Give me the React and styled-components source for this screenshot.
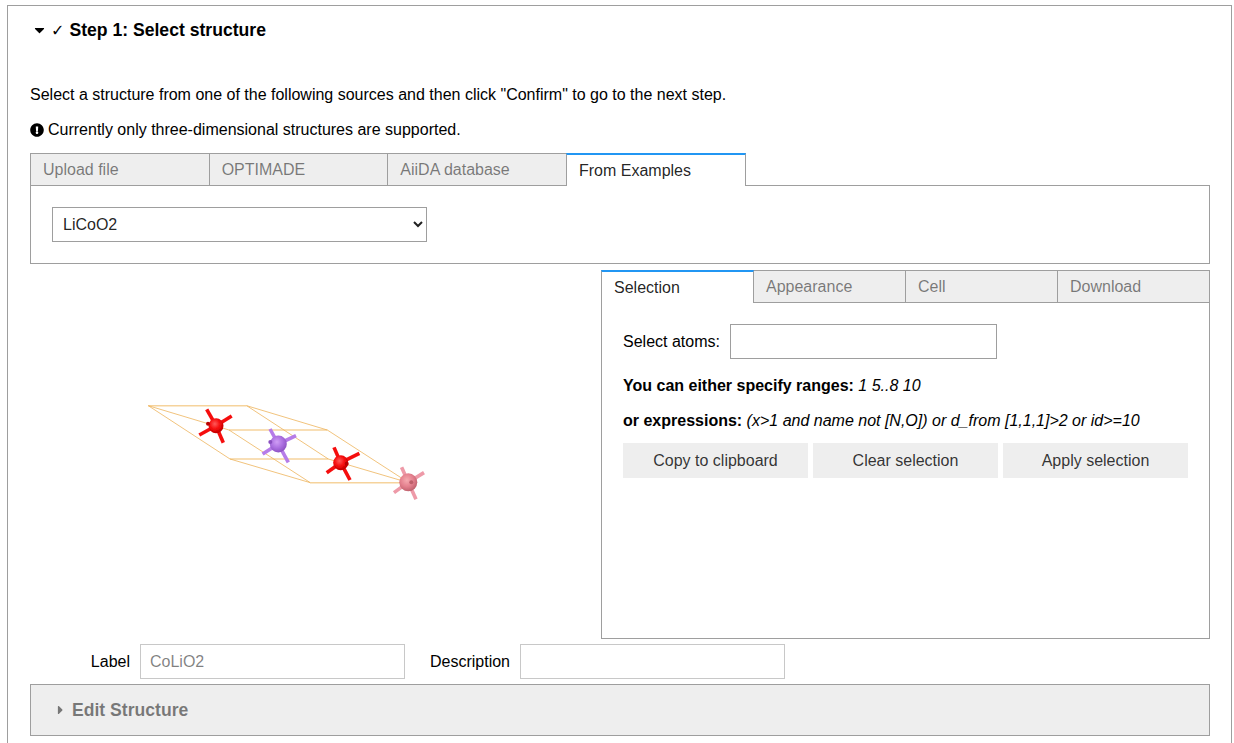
import React from 'react';
import styled, { createGlobalStyle } from 'styled-components';
import { FaCaretDown, FaCaretRight, FaExclamationCircle } from 'react-icons/fa';

const GlobalStyle = createGlobalStyle`
  html, body { margin: 0; padding: 0; height: 743px; overflow: hidden; background: #fff; }
  body { font-family: "Liberation Sans", Arial, sans-serif; font-size: 16px; color: #000; }
  * { box-sizing: border-box; }
`;

const Page = styled.div`
  width: 1225px;
  margin: 5px 0 0 7px;
  padding: 0 21px 40px 22px;
  border: 1px solid #9e9e9e;
`;

const StepHeader = styled.div`
  display: flex;
  align-items: center;
  height: 48px;
  font-size: 17.6px;
  font-weight: 700;
  svg { width: 13px; height: 16px; margin: 0 5px 0 3px; }
`;

const Check = styled.span`
  font-size: 16px;
  margin-right: 5px;
  font-family: "DejaVu Sans", sans-serif;
`;

const Paragraph = styled.div`
  height: 35px;
  display: flex;
  align-items: center;
  gap: 4px;
  margin-top: ${p => p.$top || 0}px;
  svg { width: 14px; height: 14px; }
`;

const TabBar = styled.div`
  display: flex;
  height: 33px;
  margin-top: 6px;
`;

const Tab = styled.div`
  flex: 0 0 ${p => p.$width}px;
  height: ${p => (p.$active ? 33 : 33)}px;
  margin-left: -1px;
  &:first-child { margin-left: 0; }
  padding: 0 12px;
  display: flex;
  align-items: center;
  border: 1px solid #9e9e9e;
  background: ${p => (p.$active ? '#fff' : '#eeeeee')};
  color: ${p => (p.$active ? 'rgba(0,0,0,0.87)' : 'rgba(0,0,0,0.5)')};
  ${p => p.$active && `
    border-top: 2px solid #2196f3;
    border-bottom: 0;
    position: relative;
    z-index: 1;
    padding-top: 0;
  `}
`;

const TabBody = styled.div`
  padding: 21px;
  margin-top: -1px;
  border: 1px solid #9e9e9e;
`;

const Select = styled.select`
  display: block;
  width: 375px;
  height: 35px;
  padding: 0 6px;
  font: 16px "Liberation Sans", Arial, sans-serif;
  color: rgba(0,0,0,0.87);
  background: #fff;
  border: 1px solid #9e9e9e;
  border-radius: 0;
  outline: none;
`;

const ViewerRow = styled.div`
  display: flex;
  height: 369px;
  margin-top: 6px;
`;

const Viewer = styled.div`
  flex: 0 0 571px;
  svg { display: block; }
`;

const SidePanel = styled.div`
  flex: 0 0 609px;
  display: flex;
  flex-direction: column;
  ${TabBar} { margin-top: 0; }
  ${TabBody} { flex: 1; }
`;

const FieldRow = styled.div`
  display: flex;
  align-items: center;
  gap: 10px;
  height: 35px;
`;

const TextInput = styled.input`
  width: ${p => p.$width}px;
  height: 35px;
  padding: 0 9px;
  font: 16px "Liberation Sans", Arial, sans-serif;
  border: 1px solid ${p => (p.disabled || p.$light ? '#c8c8c8' : '#9e9e9e')};
  border-radius: 0;
  background: #fff;
  outline: none;
  &:disabled { color: rgba(0,0,0,0.5); }
`;

const HelpLine = styled.div`
  height: 35px;
  display: flex;
  align-items: center;
  white-space: pre;
  margin-top: ${p => p.$top || 0}px;
`;

const ButtonRow = styled.div`
  display: flex;
  gap: 5px;
  margin-top: 5px;
`;

const Button = styled.button`
  width: 185px;
  height: 35px;
  padding: 0;
  border: 0;
  background: #eeeeee;
  color: rgba(0,0,0,0.8);
  font: 16px "Liberation Sans", Arial, sans-serif;
`;

const MetaRow = styled.div`
  display: flex;
  gap: 5px;
  margin-top: 5px;
`;

const MetaField = styled.div`
  display: flex;
  align-items: center;
  gap: 10px;
`;

const MetaLabel = styled.label`
  width: 100px;
  text-align: right;
`;

const Collapsed = styled.div`
  display: flex;
  align-items: center;
  height: 52px;
  margin-top: 5px;
  padding-left: 24px;
  background: #eeeeee;
  border: 1px solid #9e9e9e;
  color: rgba(0,0,0,0.5);
  font-size: 17.6px;
  font-weight: 700;
  svg { width: 11px; height: 14px; margin-right: 6px; }
`;

const corners = {
  A: [148.3, 405.7], B: [246.7, 405.7], C: [327.3, 430], D: [229, 430],
  E: [230, 459], F: [328.3, 459], G: [310.3, 482.7], H: [408.7, 482.7],
};
const flatEdges = ['AB', 'DC', 'EF', 'GH'];
const slantEdges = ['BC', 'AD', 'AE', 'EG', 'DG', 'BF', 'FH', 'CH'];

const atoms = [
  { id: 'red', x: 216, y: 425.7, r: 7.5, stick: '#f50d0d', ends: [[-9.3, -16.3], [15.7, -9.7], [7.3, 17], [-16.7, 9.3]], stub: [-8, -2] },
  { id: 'purple', x: 278.3, y: 444, r: 8.5, stick: '#b67ce8', ends: [[-8.3, -15], [17.7, -8.3], [10, 18.3], [-15.7, 10]], stub: [-8, -2] },
  { id: 'red', x: 340.7, y: 462.7, r: 7.5, stick: '#f50d0d', ends: [[-6.7, -15.3], [18.7, -9.3], [9.3, 17.3], [-14, 10]], stub: [6, 1] },
  { id: 'pink', x: 408.3, y: 482.3, r: 9, stick: '#ee9aa8', ends: [[-6.7, -15], [15.7, -9.7], [7.7, 17], [-14.3, 10.3]], stub: [3, 0] },
];

const spheres = {
  red: ['#ff5a5a', '#f50a0a', '#b80000'],
  purple: ['#cf9df5', '#ab6fe0', '#8a50c0'],
  pink: ['#f5aab0', '#e4808e', '#bd5f6b'],
};

function Structure() {
  const edge = (name, props) => {
    const [a, b] = [corners[name[0]], corners[name[1]]];
    return <line key={name} x1={a[0]} y1={a[1]} x2={b[0]} y2={b[1]} {...props} />;
  };
  return (
    <svg width="571" height="369" viewBox="30 270 571 369">
      <defs>
        {Object.entries(spheres).map(([id, c]) => (
          <radialGradient key={id} id={id} cx="0.42" cy="0.38" r="0.65">
            <stop offset="0" stopColor={c[0]} />
            <stop offset="0.55" stopColor={c[1]} />
            <stop offset="1" stopColor={c[2]} />
          </radialGradient>
        ))}
        <filter id="soft"><feGaussianBlur stdDeviation="0.35" /></filter>
      </defs>
      <g filter="url(#soft)">
        {flatEdges.map(n => edge(n, { stroke: '#f6d39c', strokeWidth: 1.4 }))}
        {slantEdges.map(n => edge(n, { stroke: '#eeb45c', strokeWidth: 0.8 }))}
        {atoms.map((a, i) => (
          <g key={i}>
            {a.ends.map((e, j) => (
              <line key={j} x1={a.x} y1={a.y} x2={a.x + e[0]} y2={a.y + e[1]} stroke={a.stick} strokeWidth="3.6" />
            ))}
            <circle cx={a.x} cy={a.y} r={a.r} fill={`url(#${a.id})`} />
            <circle cx={a.x + a.stub[0]} cy={a.y + a.stub[1]} r="2" fill={spheres[a.id][2]} />
          </g>
        ))}
      </g>
    </svg>
  );
}

export default function App() {
  return (
    <>
      <GlobalStyle />
      <Page>
        <StepHeader><FaCaretDown /><Check>✓</Check>Step 1: Select structure</StepHeader>
        <Paragraph $top={23}>Select a structure from one of the following sources and then click "Confirm" to go to the next step.</Paragraph>
        <Paragraph><FaExclamationCircle />Currently only three-dimensional structures are supported.</Paragraph>
        <TabBar>
          <Tab $width={179.67}>Upload file</Tab>
          <Tab $width={179.67}>OPTIMADE</Tab>
          <Tab $width={179.67}>AiiDA database</Tab>
          <Tab $width={180} $active>From Examples</Tab>
        </TabBar>
        <TabBody>
          <Select defaultValue="LiCoO2">
            <option>LiCoO2</option>
            <option>Si</option>
          </Select>
        </TabBody>
        <ViewerRow>
          <Viewer><Structure /></Viewer>
          <SidePanel>
            <TabBar>
              <Tab $width={153} $active>Selection</Tab>
              <Tab $width={153}>Appearance</Tab>
              <Tab $width={153}>Cell</Tab>
              <Tab $width={153}>Download</Tab>
            </TabBar>
            <TabBody>
              <FieldRow>
                <span>Select atoms:</span>
                <TextInput $width={267} />
              </FieldRow>
              <HelpLine $top={9}><b>You can either specify ranges: </b><i>1 5..8 10</i></HelpLine>
              <HelpLine><b>or expressions: </b><i>(x&gt;1 and name not [N,O]) or d_from [1,1,1]&gt;2 or id&gt;=10</i></HelpLine>
              <ButtonRow>
                <Button>Copy to clipboard</Button>
                <Button>Clear selection</Button>
                <Button>Apply selection</Button>
              </ButtonRow>
            </TabBody>
          </SidePanel>
        </ViewerRow>
        <MetaRow>
          <MetaField>
            <MetaLabel>Label</MetaLabel>
            <TextInput $width={265} disabled defaultValue="CoLiO2" />
          </MetaField>
          <MetaField>
            <MetaLabel>Description</MetaLabel>
            <TextInput $width={265} $light />
          </MetaField>
        </MetaRow>
        <Collapsed><FaCaretRight />Edit Structure</Collapsed>
      </Page>
    </>
  );
}
